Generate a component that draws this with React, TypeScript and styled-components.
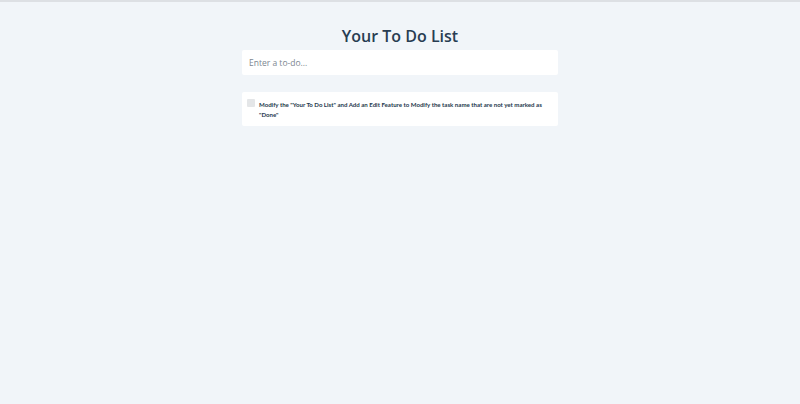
import React from "react";
import styled, { createGlobalStyle } from "styled-components";

const Global = createGlobalStyle`
  html, body { margin: 0; padding: 0; }
  body {
    background: #f1f5f9;
    font-family: "Open Sans", "Noto Sans", sans-serif;
    color: #2c3e50;
    min-height: 404px;
  }
  * { box-sizing: border-box; }
`;

const Page = styled.div`
  min-height: 404px;
  border-top: 2px solid #dde0e4;
  display: flex;
  flex-direction: column;
  align-items: center;
`;

const Container = styled.div`
  width: 316px;
  display: flex;
  flex-direction: column;
  margin-top: 22px;
`;

const Title = styled.h1`
  margin: 0 0 2px;
  text-align: center;
  font-size: 16px;
  font-weight: 600;
  line-height: 24px;
  color: #283d52;
`;

const Input = styled.input`
  height: 25px;
  border: none;
  outline: none;
  background: #ffffff;
  border-radius: 2px;
  padding: 0 7px;
  font-family: "Open Sans", sans-serif;
  font-size: 8.5px;
  color: #2c3e50;
  &::placeholder { color: #7d8791; }
`;

const List = styled.ul`
  list-style: none;
  margin: 17px 0 0;
  padding: 0;
`;

const Item = styled.li`
  background: #ffffff;
  border-radius: 2px;
  display: flex;
  align-items: flex-start;
  gap: 4px;
  padding: 7px 4px 6px 5px;
  min-height: 34px;
`;

const Check = styled.span`
  flex: none;
  width: 8px;
  height: 8px;
  background: #e4e6e8;
  border-radius: 1px;
`;

const Text = styled.span`
  font-family: "Lato", "Open Sans", sans-serif;
  font-size: 6.1px;
  font-weight: 700;
  line-height: 10px;
  color: #24384c;
  padding-top: 1px;
  max-width: 290px;
`;

export default function App() {
  return (
    <>
      <Global />
      <Page>
        <Container>
          <Title>Your To Do List</Title>
          <Input placeholder="Enter a to-do..." />
          <List>
            <Item>
              <Check />
              <Text>
                Modify the "Your To Do List" and Add an Edit Feature to Modify the task name that are not yet marked as "Done"
              </Text>
            </Item>
          </List>
        </Container>
      </Page>
    </>
  );
}
